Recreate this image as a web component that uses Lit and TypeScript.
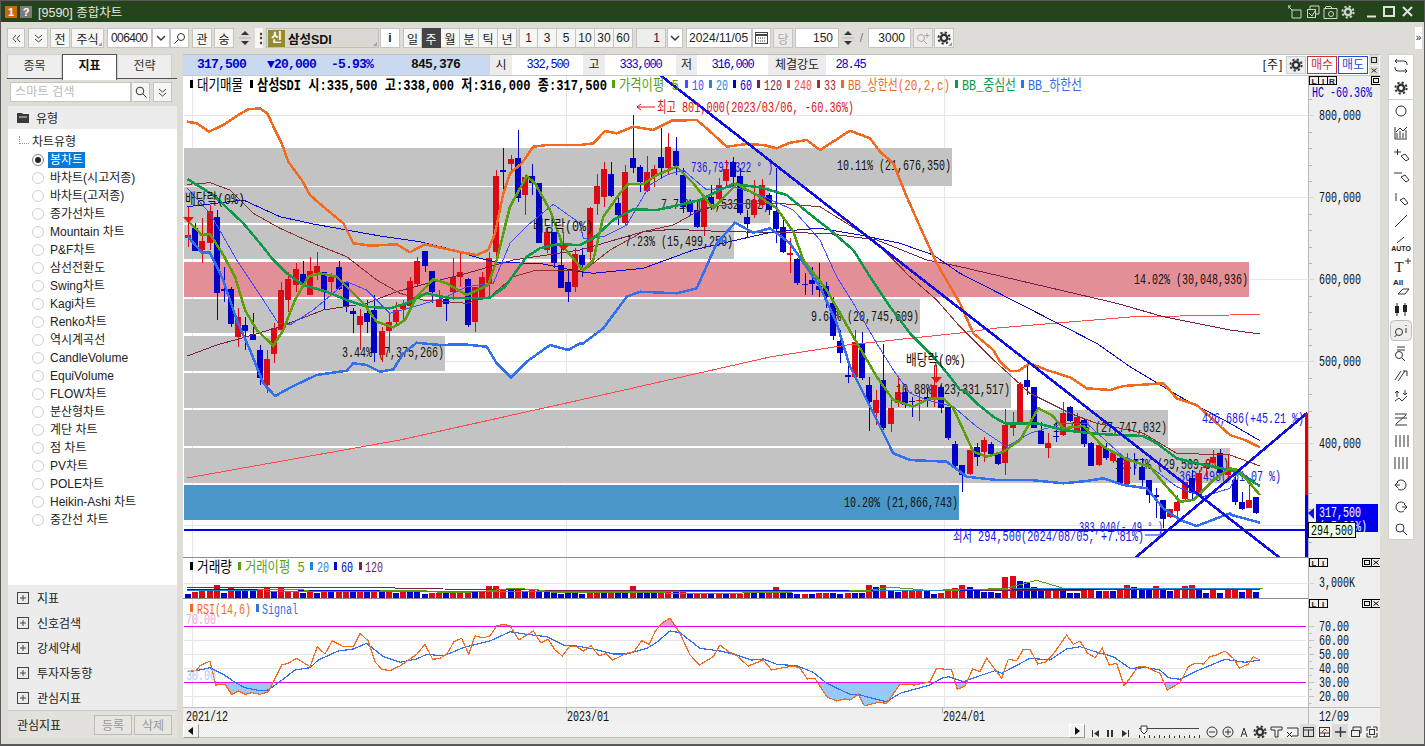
import { LitElement, css, html, svg } from 'lit';
import { customElement } from 'lit/decorators.js';

type Seg = [number, number, number[]];

const Z8 = [180, 100];
const Z9 = [560, 100];
const Z10 = [830, 300];
const Z5 = [1025, 380];
const Z11 = [180, 555];
const Z12 = [680, 555];
const Z6 = [1025, 600];

// the point lists are read off 3x crops, so they are kept in crop coordinates
const seg = (o: number[], pts: number[]): Seg => [o[0], o[1], pts];

function pts(...segs: Seg[]) {
  const out: string[] = [];
  let last = -1e9;
  for (const [ox, oy, a] of segs) {
    for (let i = 0; i < a.length; i += 2) {
      const x = ox + a[i] / 3;
      const y = oy + a[i + 1] / 3;
      if (x > last) {
        out.push(`${x.toFixed(1)},${y.toFixed(1)}`);
        last = x;
      }
    }
  }
  return out.join(' ');
}

// wick top, body top, body bottom, wick bottom, 1 = up
const CANDLES = [
  [207,235,238,247,1],[223,228,251,251,0],[218,241,250,263,1],[205,211,243,250,1],[210,217,293,320,0],
  [267,289,291,302,0],[287,289,324,327,0],[308,317,337,347,1],[317,325,331,350,0],[313,334,340,340,0],
  [345,350,378,385,0],[350,359,385,393,1],[323,328,354,363,1],[282,290,330,330,1],[272,279,300,312,1],
  [263,269,285,292,1],[261,274,285,285,0],[257,271,295,295,1],[252,266,273,280,1],[272,272,290,310,0],
  [273,277,282,295,1],[261,267,289,290,0],[282,282,307,312,0],[308,311,314,333,0],[309,316,325,350,1],
  [300,313,322,333,0],[295,310,353,362,0],[327,331,355,362,1],[313,322,331,353,1],[302,310,322,327,1],
  [300,305,309,320,1],[277,281,306,307,1],[257,261,284,287,1],[251,251,266,272,0],[271,271,292,303,0],
  [290,299,307,307,1],[297,299,304,321,0],[258,277,292,300,1],[253,272,277,287,1],[278,279,325,327,0],
  [287,287,322,332,1],[272,277,298,300,1],[252,258,283,297,1],[170,176,252,260,1],[148,170,172,193,0],
  [155,159,164,173,1],[130,158,198,202,0],[175,177,195,215,1],[164,176,183,195,0],[183,183,243,243,0],
  [227,232,250,253,1],[232,232,263,268,0],[243,265,288,288,0],[270,282,292,302,0],[248,254,287,292,1],
  [248,255,265,277,0],[207,208,252,260,1],[174,186,204,215,1],[162,169,197,207,1],[162,174,196,197,0],
  [198,203,215,225,0],[165,172,223,225,1],[115,158,168,173,0],[165,167,182,192,0],[156,172,191,192,1],
  [165,169,177,187,1],[128,157,168,178,0],[133,147,168,175,1],[137,151,166,175,0],[168,175,207,213,0],
  [200,202,212,215,0],[200,210,227,228,0],[197,199,227,236,1],[185,197,204,210,0],[178,185,199,200,1],
  [160,169,181,187,1],[157,162,177,188,0],[168,176,213,215,0],[210,217,224,237,0],[180,200,215,218,1],
  [179,185,205,208,1],[193,195,210,215,0],[168,211,229,243,0],[217,227,252,253,0],[238,253,255,273,1],
  [258,259,283,285,0],[273,284,285,295,0],[267,280,284,295,0],[263,286,290,297,0],[282,286,297,308,0],
  [297,303,336,340,0],[330,341,353,363,0],[360,375,377,383,0],[330,342,377,378,1],[332,344,378,380,0],
  [377,385,402,431,0],[390,400,413,425,1],[344,380,428,430,0],[398,408,424,432,1],[377,392,403,407,1],
  [387,392,405,408,0],[397,401,402,417,0],[390,400,401,421,1],[388,397,399,407,0],[365,385,399,407,1],
  [385,387,408,413,0],[407,407,438,440,0],[441,444,466,468,0],[465,465,475,492,0],[450,450,474,475,1],
  [443,447,457,466,0],[437,440,452,462,1],[442,444,454,457,0],[452,454,464,465,0],[409,425,463,475,1],
  [412,425,428,436,1],[382,384,424,424,1],[365,380,387,395,0],[387,387,428,428,0],[422,431,444,444,0],
  [433,443,448,458,1],[423,436,437,442,0],[402,413,435,436,1],[406,407,421,422,0],[413,417,432,433,1],
  [418,420,444,447,0],[442,443,466,466,0],[442,445,465,466,1],[443,448,458,460,0],[452,453,461,463,1],
  [457,458,483,485,0],[453,459,484,485,1],[453,460,461,475,0],[458,467,480,487,0],[480,480,495,503,0],
  [488,495,497,518,0],[500,500,519,528,0],[509,509,517,518,1],[495,502,511,517,1],[482,482,499,500,1],
  [470,478,493,500,0],[470,473,496,497,1],[460,463,468,477,1],[450,457,463,463,1],[449,453,473,475,0],
  [455,468,475,477,1],[468,480,502,505,0],[492,502,509,510,0],[483,500,508,508,1],[497,497,513,514,0],
];

// positive = red bar, negative = blue bar, in pixels
const VOLUME = [
  -4,6,8,8,13,-5,10,-7,-7,-7,9,10,-7,10,7,7,-5,7,-5,6,
  -6,6,6,-6,6,-8,8,-6,6,-5,6,-7,-7,-4,5,5,-6,6,5,5,
  -6,6,12,12,9,-9,10,-7,9,-6,-7,-6,-4,-5,-5,-4,5,5,-5,5,
  -6,-7,12,-7,-7,-7,6,6,-7,6,-4,5,5,-4,4,-4,4,4,5,-5,
  -5,5,11,-5,-5,-4,4,-4,5,5,-5,-4,5,-5,-5,13,-11,13,-8,-6,
  7,7,9,-7,-4,5,9,10,13,-11,-9,-6,-6,-5,21,22,-17,-16,-11,-8,
  8,8,-8,-5,-5,8,9,-7,7,-7,9,13,-11,-8,-8,12,-8,-7,8,12,
  13,-10,-5,8,-5,8,8,-6,8,-6,
];

const UPPER = pts(
  seg(Z8, [22,65,50,70,87,95,130,75,180,42,205,28,240,25,262,40,285,90,305,130,325,185,365,240,390,285,430,320,490,370,520,430,570,437,650,433,690,457,735,433,790,445,850,458,890,465,925,450,945,400,970,280,990,220,1025,190,1060,140,1100,135,1200,135]),
  seg(Z9, [60,138,100,130,135,93,170,100,220,80,280,90,335,62,410,60,440,85,500,140,560,132,610,135,650,145,690,128,740,120,780,150,870,92,930,115,960,155,1000,190,1040,290,1080,380,1130,490,1200,610]),
  seg(Z10, [430,100,490,150,510,185,540,213,565,213,600,190,650,210,720,232,770,265,840,270,880,258,1000,250,1040,295,1100,315,1150,360,1200,405]),
  seg(Z5, [660,180,705,202]),
);
const MID = pts(
  seg(Z8, [22,237,100,285,190,370,240,430,280,480,320,520,370,555,440,575,500,600,560,620,630,625,680,610,740,580,800,593,860,595,930,593,975,560,1040,470,1080,445,1130,433,1200,435]),
  seg(Z9, [50,433,100,415,160,360,220,328,290,330,370,312,420,300,480,270,520,252,600,262,680,285,740,335,810,390,880,450,930,530,990,620,1050,700,1120,770,1170,830,1200,870]),
  seg(Z10, [400,270,440,310,490,350,525,370,620,370,700,390,780,400,860,405,940,408,980,430,1040,475,1100,490,1200,510]),
  seg(Z5, [640,280,705,318]),
);
const LOWER = pts(
  seg(Z8, [22,408,65,457,90,458,130,540,170,660,210,750,250,850,285,888,340,858,410,825,500,812,520,790,560,795,600,815,640,808,670,760,710,728,780,735,850,733,920,740,950,790,993,833,1040,785,1110,735,1165,750,1200,730]),
  seg(Z9, [25,750,70,730,130,685,200,590,240,575,350,580,410,565,470,430,525,368,580,398,630,385,690,430,780,560,830,670,870,800,920,900]),
  seg(Z10, [100,270,190,460,240,480,350,485,410,530,500,540,600,540,700,550,770,543,820,535,880,555,950,565,1000,625,1050,660,1100,678,1200,640]),
  seg(Z5, [620,405,705,428]),
);
const MA5 = pts(
  seg(Z8, [22,360,65,405,90,402,130,465,165,530,195,630,230,690,280,737,310,690,345,600,385,530,420,520,470,530,500,560,550,610,590,665,640,682,675,660,710,590,760,538,800,550,860,585,925,555,950,480,990,320,1040,228,1065,250,1110,330,1150,440,1200,500]),
  seg(Z9, [40,490,70,510,100,480,130,350,180,280,205,252,250,252,290,225,350,200,400,250,460,325,530,252,590,285,650,325,700,395,730,480,800,570,840,640,880,710,950,830,1000,900]),
  seg(Z10, [250,320,300,295,340,295,370,325,430,455,470,470,520,455,570,420,625,325,665,345,700,385,760,378,820,440,890,478,960,500,1010,560,1050,605,1090,600,1150,540,1200,505]),
  seg(Z5, [615,258,640,270,705,345]),
);
const MA10 = pts(
  seg(Z8, [22,265,90,340,170,480,250,600,295,670,330,675,400,630,500,545,560,570,630,640,720,615,800,590,860,560,940,550,990,430,1050,370,1120,313,1200,370]),
  seg(Z9, [40,370,70,415,130,410,200,375,270,255,320,225,370,210,440,270,520,260,600,285,700,330,780,420,830,530,880,610,950,730,1000,810,1050,880]),
  seg(Z10, [210,240,290,300,370,320,440,380,530,440,600,400,700,370,770,370,880,470,960,500,1040,560,1120,590,1200,565]),
  seg(Z5, [640,270,705,318]),
);
const MA60 = pts(
  seg(Z8, [22,320,190,300,300,350,400,372,500,390,600,408,720,425,800,445,900,475,960,488,1080,490,1200,515]),
  seg(Z9, [100,520,250,505,400,450,530,420,640,395,780,385,900,405,1020,430,1120,465,1200,520]),
  seg(Z10, [800,130,900,200,1050,290,1200,370]),
  seg(Z5, [705,182]),
);
const MA33 = pts(
  seg(Z8, [22,253,90,248,150,270,220,340,300,385,400,430,500,470,590,540,660,580,730,600,860,610,930,590,1000,530,1070,510,1200,510]),
  seg(Z9, [80,505,150,450,250,395,340,375,430,325,530,310,650,310,780,320,860,370,950,430,1050,530,1130,600,1200,680]),
  seg(Z10, [400,90,480,170,600,280,720,340,800,370,940,400,1040,460,1200,465]),
  seg(Z5, [705,258]),
);
const MA120 = pts(
  seg(Z8, [22,768,110,735,200,710,300,680,430,630,560,610,650,575,760,545,860,520,1000,480,1200,450]),
  seg(Z9, [250,395,340,388,500,395,800,400,950,420,1100,480,1200,500]),
  seg(Z10, [860,10,1000,50,1200,90]),
  [1260, 334, [0, 0]],
);
const MA240 = '187,478 400,440 580,400 770,357 847,345 960,333 997,328 1130,317 1230,315 1260,314';

const RSI = pts(
  seg(Z11, [24,350,50,345,60,332,90,318,108,390,135,388,155,418,175,408,195,418,215,413,240,418,265,410,305,330,325,325,350,310,390,335,412,275,435,297,457,257,490,275,520,275,540,235,565,258,585,320,605,343,630,347,660,333,710,298,735,268,758,313,780,310,800,298,822,260,845,250,866,298,885,243,910,248,930,243,950,213,970,208,990,212,1017,255,1060,228,1082,263,1105,253,1125,285,1147,303,1168,275,1190,275,1210,288,1233,272,1257,303,1278,295,1298,315,1340,295,1362,290,1385,257,1408,268,1425,230,1445,205,1470,190,1500,235]),
  seg(Z12, [30,300,58,330,100,305,120,270,145,290,165,298,205,333,250,315,275,345,300,340,340,333,360,340,382,372,405,370,440,425,470,438,495,432,510,435,535,418,553,452,595,442,620,445,660,388,705,390,750,380,770,340,815,345,832,403,855,393,878,342,900,350,920,310,965,370,985,313,1010,317,1030,283,1050,283,1073,327,1095,322,1118,300,1160,240,1180,268,1200,258,1223,295,1245,308,1267,280,1288,330,1310,325,1332,393,1375,335,1395,335,1440,355,1462,405,1500,383]),
  seg(Z6, [490,200,510,190,535,192,555,170,575,165,600,153,625,175,643,205,670,192,685,170,705,180]),
);
const SIGNAL = pts(
  seg(Z11, [24,350,60,345,90,338,130,358,165,382,195,398,240,407,265,405,310,372,345,345,390,338,415,315,475,288,520,282,560,265,610,305,660,322,710,312,740,298,790,303,850,278,880,270,930,258,990,230,1040,238,1100,245,1155,272,1190,273,1240,282,1300,297,1340,297,1400,280,1430,262,1470,228,1500,233]),
  seg(Z12, [60,280,120,288,170,300,215,315,250,312,290,328,350,332,400,352,440,385,510,418,540,420,620,440,660,415,750,390,785,370,805,365,850,380,900,362,945,347,965,355,1050,310,1110,315,1160,282,1200,275,1245,290,1300,305,1350,340,1400,338,1440,345,1465,368,1500,373]),
  seg(Z6, [510,215,600,178,660,187,705,180]),
);
const VOL5 = pts(seg(Z11, [20,108,200,106,300,103,360,103,400,110,550,108,600,108,720,106,800,114,900,110,1000,100,1070,104,1120,112,1300,112]), seg(Z12, [110,116,220,113,560,107,630,97,700,102,760,108,980,100,1070,76,1150,100,1500,100]), [1180, 588, [250, 0]]);
const VOL60 = pts(seg(Z11, [20,102,200,102,400,106,730,108,1500,108]), seg(Z12, [130,106,800,106,1500,100]), [1180, 588, [240, 0]]);
const VOL120 = pts(seg(Z11, [20,96,600,98,790,102,1070,105,1500,106]), seg(Z12, [0,110,800,108,1500,103]), [1180, 589, [240, 0]]);
const VOL20 = pts(seg(Z11, [20,105,200,105,230,108,1500,110]), seg(Z12, [580,108,1000,102,1500,100]), [1180, 588, [240, 0]]);

const RED = '#dc0a14';
const BLUE = '#0000c8';
const TREND = '#1010e6';

const cx = (i: number) => Math.round(188 + 7.17 * i);

// the reference font is half-width: 6px per latin char, 12 per hangul
function T(x: number, y: number, s: string, fill = '#000', o: { end?: boolean; w?: number; bold?: boolean; a?: number } = {}) {
  const a = o.a ?? 6;
  const w = o.w ?? [...s].reduce((n, c) => n + (c.charCodeAt(0) < 128 ? a : a * 2), 0);
  return svg`<text x=${x} y=${y} fill=${fill} text-anchor=${o.end ? 'end' : 'start'} font-weight=${o.bold ? 'bold' : 'normal'} textLength=${w} lengthAdjust="spacingAndGlyphs">${s}</text>`;
}
const dot = (x: number, y: number, c: string) => svg`<rect x=${x} y=${y - 5} width="3" height="8" fill=${c}></rect>`;
const line = (p: string, c: string, w = 1) => svg`<polyline points=${p} fill="none" stroke=${c} stroke-width=${w} shape-rendering="crispEdges"></polyline>`;
const hl = (x1: number, x2: number, y: number, c: string, w = 1) => svg`<rect x=${x1} y=${y} width=${x2 - x1} height=${w} fill=${c}></rect>`;
const vl = (x: number, y1: number, y2: number, c: string, w = 1) => svg`<rect x=${x} y=${y1} width=${w} height=${y2 - y1} fill=${c}></rect>`;

function miniBoxes(y: number, labels: string[], marks: string[]) {
  return svg`
    ${labels.map((l, i) => svg`<rect x=${1309.5 + i * 9} y=${y + 0.5} width="9" height="8" fill="#efefef" stroke="#000"></rect>
      <text x=${1314 + i * 9} y=${y + 7.5} class="mini" text-anchor="middle">${l}</text>`)}
    ${marks.map((m, i) => {
      const x = 1380 - (marks.length - i) * 9 + 0.5;
      return svg`<rect x=${x} y=${y + 0.5} width="9" height="8" fill="#efefef" stroke="#000"></rect>
        ${m === 'x'
          ? svg`<path d="M${x + 2} ${y + 2.5}l5 4m0 -4l-5 4" stroke="#000" fill="none"></path>`
          : svg`<rect x=${x + 2} y=${y + 2.5} width="5" height="4" fill="none" stroke="#000" stroke-width="1"></rect>`}`;
    })}`;
}

function marker(x: number, y1: number, y2: number) {
  return svg`${vl(x, y1, y2, '#f01010')}<path d="M${x - 5} ${y2}h11l-5.5 6z" fill="#f01010"></path>`;
}

const BOXES: [number, number, number, string, string, number][] = [
  [148, 186, 952, '#c3c3c3', '10.11% (21,676,350)', 170],
  [187, 223, 770, '#c3c3c3', '7.71% (16,532,822)', 209],
  [225, 259, 734, '#c3c3c3', '7.23% (15,499,250)', 246],
  [262, 297, 1249, '#e38f97', '14.02% (30,048,936)', 284],
  [299, 333, 920, '#c3c3c3', '9.68% (20,745,609)', 321],
  [336, 371, 445, '#c3c3c3', '3.44% (7,375,266)', 357],
  [373, 408, 1011, '#c3c3c3', '10.88% (23,331,517)', 394],
  [410, 446, 1168, '#c3c3c3', '12.95% (27,747,032)', 432],
  [448, 483, 1230, '#c3c3c3', '13.77% (29,509,943)', 469],
  [485, 520, 959, '#4a97c7', '10.20% (21,866,743)', 507],
];

const PRICE_TICKS = [115, 197, 279, 361, 443];

function mainPane() {
  const minor: number[] = [];
  for (let y = 115 - 16; y < 556; y += 16.4) minor.push(Math.round(y));
  const legend: [number, string, string][] = [
    [685, '10', '#4050ff'], [709, '20', '#1e88d8'], [733, '60', '#0000c8'], [757, '120', '#7a1e50'],
    [787, '240', '#f04848'], [817, '33', '#a03030'], [841, 'BB_상한선(20,2,c)', '#f26a1e'],
    [955, 'BB_중심선', '#0a9a4a'], [1021, 'BB_하한선', '#2f6ff0'],
  ];
  return html`<svg class="pane" width="1197" height="483" viewBox="183 75 1197 483">
    ${PRICE_TICKS.map((y) => hl(184, 1314, y, '#e6e6e6'))}
    ${hl(184, 1308, 525, '#e6e6e6')}
    ${[192, 566, 944].map((x) => vl(x, 75, 558, '#e6e6e6'))}
    ${BOXES.map(([a, b, r, c]) => svg`<rect x="184" y=${a} width=${r - 184} height=${b - a} fill=${c}></rect>`)}
    ${BOXES.map(([, , r, , t, y]) => T(r - 1, y, t, '#111', { end: true }))}
    ${T(691, 172, '736,797(322 ° )', '#1414e6', { w: 82 })}
    ${T(1179, 481, '360,498(+51.07 %)', '#1414e6')}

    ${CANDLES.map(([wt, bt, bb, wb, up], i) => {
      const x = cx(i);
      const c = up ? RED : BLUE;
      return svg`${vl(x, wt, wb, c)}<rect x=${x - 3} y=${bt} width="6" height=${Math.max(bb - bt, 1)} fill=${c}></rect>`;
    })}

    ${line(MA240, '#ff4a4a')}
    ${line(MA120, '#7a1e50')}
    ${line(MA60, '#0a0ad0')}
    ${line(MA33, '#8e3030')}
    ${line(MA10, '#4050ff')}
    ${line(UPPER, '#f26a1e', 2.5)}
    ${line(LOWER, '#2f6ff0', 2.5)}
    ${line(MID, '#0a9a4a', 2.5)}
    ${line(MA5, '#5a9e0a', 2.5)}

    <line x1="660" y1="75" x2="1280" y2="558" stroke=${TREND} stroke-width="2.6" shape-rendering="crispEdges"></line>
    <line x1="1307" y1="413" x2="1135" y2="558" stroke=${TREND} stroke-width="2.6" shape-rendering="crispEdges"></line>
    ${hl(184, 1306, 529, '#0000f0', 2)}
    ${vl(1305, 413, 495, '#e80000', 3)}
    ${vl(1305, 495, 558, '#0000e0', 3)}

    ${marker(188, 207, 217)} ${marker(563, 232, 245)} ${marker(936, 365, 377)}
    ${T(185, 204, '배당락(0%)', '#111')} ${T(533, 231, '배당락(0%)', '#111')} ${T(906, 365, '배당락(0%)', '#111')}

    ${T(1202, 423, '426,686(+45.21 %)', '#1414e6')}
    ${T(1079, 532, '383,040(-.49 ° )', '#1414e6', { w: 84 })}
    ${T(953, 541, '최저 294,500(2024/08/05, +7.81%)', '#1414e6', { w: 191 })}
    <path d="M1145 535h19m-4 -3l4 3l-4 3" fill="none" stroke="#1414e6"></path>
    <path d="M655 107h-18m4 -3l-4 3l4 3" fill="none" stroke="#e01010"></path>
    ${T(657, 112, '최고 801,000(2023/03/06, -60.36%)', '#e01010', { w: 197 })}

    <!-- legend -->
    ${dot(190, 85, '#000')} ${T(197, 90, '대기매물', '#000', { w: 46 })}
    ${dot(250, 85, '#000')} ${T(257, 90, '삼성SDI 시:335,500 고:338,000 저:316,000 종:317,500', '#000', { bold: true, w: 350 })}
    ${dot(612, 85, '#5a9e0a')} ${T(619, 90, '가격이평  5', '#5a9e0a', { w: 60 })}
    ${legend.map(([x, t, c]) => svg`${dot(x, 85, c)}${T(x + 7, 90, t, c)}`)}

    <!-- price scale -->
    <rect x="1308" y="75" width="72" height="483" fill="#efefef"></rect>
    ${vl(1308, 75, 558, '#b9b9b9')} ${vl(1380, 75, 558, '#c4c4c4')}
    ${minor.map((y) => hl(1308, 1312, y, '#b4b4b4'))}
    ${PRICE_TICKS.map((y, i) => svg`${hl(1308, 1314, y, '#d4d4d4')}${T(1319, y + 5, ['800,000', '700,000', '600,000', '500,000', '400,000'][i], '#111')}`)}
    ${T(1312, 97, 'HC -60.36%', '#0000d0')}
    ${miniBoxes(76, ['L', 'I', 'R'], ['o'])}

    <path d="M1308 513l6 -5v11z" fill="#1010e6"></path>
    <rect x="1316" y="504" width="62" height="28" fill="#0000f0"></rect>
    ${T(1319, 517, '317,500', '#fff')}
    ${T(1319, 531, '(-5.93%)', '#fff')}
    <rect x="1308.5" y="522.5" width="47" height="15" fill="#eaffe8" stroke="#000"></rect>
    ${T(1311, 535, '294,500', '#000')}
    ${hl(183, 1308, 557, '#8c8c8c')}
    ${hl(183, 1380, 75, '#c8c8c8')}
  </svg>`;
}

function volumePane() {
  return html`<svg class="pane" width="1197" height="41" viewBox="183 558 1197 41">
    ${hl(184, 1308, 583, '#e6e6e6')}
    ${[192, 566, 944].map((x) => vl(x, 558, 598, '#e6e6e6'))}
    ${VOLUME.map((h, i) => svg`<rect x=${cx(i) - 3} y=${598 - Math.abs(h)} width="6" height=${Math.abs(h)} fill=${h > 0 ? RED : BLUE}></rect>`)}
    ${line(VOL120, '#7a1e50')} ${line(VOL60, '#0a0ad0')} ${line(VOL5, '#5a9e0a')} ${line(VOL20, '#1e88d8')}
    ${dot(190, 567, '#000')} ${T(197, 572, '거래량', '#000', { w: 35 })}
    ${dot(238, 567, '#5a9e0a')} ${T(245, 572, '거래이평  5', '#5a9e0a', { w: 60 })}
    ${dot(310, 567, '#1e88d8')} ${T(317, 572, '20', '#1e88d8')}
    ${dot(334, 567, '#0000c8')} ${T(341, 572, '60', '#0000c8')}
    ${dot(359, 567, '#7a1e50')} ${T(365, 572, '120', '#7a1e50')}
    <rect x="1308" y="558" width="72" height="41" fill="#efefef"></rect>
    ${vl(1308, 558, 599, '#b9b9b9')} ${vl(1380, 558, 599, '#c4c4c4')}
    ${hl(1308, 1314, 583, '#d4d4d4')}
    ${T(1319, 587, '3,000K', '#111')}
    ${miniBoxes(558, ['L', 'I'], ['o', 'x'])}
    ${hl(183, 1308, 598, '#8c8c8c')}
  </svg>`;
}

function rsiPane() {
  const first = RSI.split(' ')[0].split(',')[0];
  const last = RSI.split(' ').pop()!.split(',')[0];
  const labels = ['70.00', '60.00', '50.00', '40.00', '30.00', '20.00'];
  const ys = [626, 640, 654, 668, 682, 696];
  return html`<svg class="pane" width="1197" height="108" viewBox="183 599 1197 108">
    <defs>
      <clipPath id="lo"><rect x="184" y="682" width="1124" height="25"></rect></clipPath>
      <clipPath id="hi"><rect x="184" y="599" width="1124" height="27"></rect></clipPath>
    </defs>
    ${ys.map((y) => hl(184, 1306, y, '#e4e4e4'))}
    ${[192, 566, 944].map((x) => vl(x, 599, 707, '#e6e6e6'))}
    <polygon points="${first},682 ${RSI} ${last},682" fill="#99c8fb" clip-path="url(#lo)"></polygon>
    <polygon points="${first},626 ${RSI} ${last},626" fill="#f09ccc" clip-path="url(#hi)"></polygon>
    ${hl(184, 1306, 626, '#f000f0')} ${hl(184, 1306, 682, '#f000f0')}
    ${line(SIGNAL, '#2f6ff0', 1.2)}
    ${line(RSI, '#f26a1e', 1.2)}
    ${T(186, 624, '70.00', '#f7a1d4')} ${T(186, 680, '30.00', '#a5cffb')}
    ${dot(190, 609, '#f26a1e')} ${T(197, 614, 'RSI(14,6)', '#f26a1e')}
    ${dot(256, 609, '#2f6ff0')} ${T(262, 614, 'Signal', '#2f6ff0')}
    <rect x="1308" y="599" width="72" height="108" fill="#efefef"></rect>
    ${vl(1308, 599, 707, '#b9b9b9')} ${vl(1380, 599, 707, '#c4c4c4')}
    ${ys.map((y, i) => svg`${hl(1308, 1314, y, '#c4c4c4')}${hl(1308, 1312, y + 7, '#c4c4c4')}${T(1319, y + 5, labels[i], '#111')}`)}
    ${miniBoxes(599, ['L', 'I'], ['o', 'x'])}
  </svg>`;
}

function axisPane() {
  return html`<svg class="pane" width="1197" height="17" viewBox="183 707 1197 17">
    <rect x="183" y="707" width="1197" height="17" fill="#efefef"></rect>
    ${hl(183, 1380, 707, '#bdbdbd')} ${vl(1308, 707, 724, '#b9b9b9')} ${vl(1380, 707, 724, '#c4c4c4')}
    ${vl(566, 708, 713, '#b0b0b0')} ${vl(942, 708, 713, '#b0b0b0')}
    ${T(186, 721, '2021/12', '#111')} ${T(567, 721, '2023/01', '#111')} ${T(943, 721, '2024/01', '#111')}
    ${T(1319, 721, '12/09', '#111')}
  </svg>`;
}

function gear(x: number, y: number, c = '#333') {
  return svg`<circle cx=${x} cy=${y} r="3.2" fill="none" stroke=${c} stroke-width="2.4"></circle>
    <circle cx=${x} cy=${y} r="5.6" fill="none" stroke=${c} stroke-width="2" stroke-dasharray="2.2 2.2"></circle>`;
}
const gearIcon = html`<svg width="14" height="14" viewBox="0 0 14 14">${gear(7, 7)}</svg>`;

function controls() {
  const ticks = [];
  for (let x = 1139; x <= 1199; x += 5) ticks.push(vl(x, x % 2 ? 735 : 736, 738, '#333'));
  return html`<svg class="ctl" width="295" height="14" viewBox="1085 724 295 14">
    <g fill="#333" stroke="none">
      <path d="M1092 730h1v7h-1zM1099 730v7l-5 -3.5z"></path>
      <path d="M1107 730h2v7h-2zM1111 730h2v7h-2z"></path>
      <path d="M1122 730v7l5 -3.5zM1128 730h1v7h-1z"></path>
    </g>
    ${hl(1139, 1199, 728, '#444')}
    <path d="M1141 726h6v5l-3 3l-3 -3z" fill="#fff" stroke="#333"></path>
    ${ticks}
    <g fill="none" stroke="#333">
      <circle cx="1212" cy="732" r="5"></circle><path d="M1209 732h6"></path>
      <circle cx="1228" cy="732" r="5"></circle><path d="M1225 732h6M1228 729v6"></path>
      <path d="M1241 737l3 -9l3 9M1242 734h4"></path>
      <path d="M1271 727h11v3h-4v7h-3v-7h-4z"></path>
      <path d="M1287 728h11v8h-6"></path><path d="M1287 732l5 5m0 -5l-5 5" stroke="#222"></path>
    </g>
    ${gear(1260, 732)}
    <rect x="1300" y="724" width="16" height="14" fill="#dcdcdc"></rect>
    <rect x="1332" y="724" width="16" height="14" fill="#dcdcdc"></rect>
    <g fill="none" stroke="#333">
      <rect x="1303.5" y="727.5" width="10" height="9"></rect><path d="M1303 730h11M1308.5 730v7"></path>
      <rect x="1319.5" y="727.5" width="10" height="9"></rect><path d="M1319 733h11M1324.5 733v4"></path>
      <path d="M1335 732h11M1340.5 727v10" stroke-width="1.4"></path>
      <rect x="1351.5" y="730.5" width="8" height="6"></rect><path d="M1353 730v-3h8v6h-2"></path>
      <path d="M1367 731v-4h4M1373 727h4v4M1377 733v4h-4M1371 737h-4v-4"></path><rect x="1369.5" y="729.5" width="5" height="5"></rect>
    </g>
    <path d="M1322 733l3 -3l2 2" stroke="#d02020" fill="none" transform="translate(0 -1)"></path>
  </svg>`;
}

const TOOL_ICONS = [
  svg`<path d="M8 4l-2 2l2 2M6 6h9a3 3 0 0 1 3 3v1M16 18l2 -2l-2 -2M18 16h-9a3 3 0 0 1 -3 -3v-1" fill="none" stroke="#333"></path>`,
  gear(12, 11),
  svg`<circle cx="12" cy="11" r="5" fill="none" stroke="#333"></circle>`,
  svg`<path d="M6 5v12h12M8 16v-5M11 16v-7M14 16v-5M17 16v-8M7 10l4 -4l3 3l4 -4" fill="none" stroke="#333"></path>`,
  svg`<path d="M5 8h7M8.5 5v6M12 12l4 -2l4 5l-3 2z" fill="none" stroke="#333"></path>`,
  svg`<path d="M5 7h8M12 11l4 -2l4 5l-3 2z" fill="none" stroke="#333"></path>`,
  svg`<path d="M7 5v8M11 12l4 -2l4 5l-3 2z" fill="none" stroke="#333"></path>`,
  svg`<path d="M6 17l12 -12" fill="none" stroke="#333"></path>`,
  svg`<path d="M8 11l7 -6" fill="none" stroke="#333"></path><text x="12" y="19" text-anchor="middle" class="auto">AUTO</text>`,
  svg`<text x="10" y="18" text-anchor="middle" class="big">T</text><path d="M16 7h6M19 4v6" stroke="#333" fill="none"></path>`,
  svg`<text x="9" y="9" text-anchor="middle" class="mini">All</text><path d="M9 18l5 -5h6l-4 5z" fill="none" stroke="#333"></path>`,
  svg`<path d="M8 5v13M16 5v13" stroke="#222"></path><rect x="6" y="8" width="4" height="7" fill="#222"></rect><rect x="14" y="7" width="4" height="7" fill="#222"></rect>`,
  svg`<rect x="1.5" y="0.5" width="21" height="20" rx="4" fill="#ededeb" stroke="#bdbdbd"></rect><circle cx="10" cy="12" r="3.5" fill="none" stroke="#333"></circle><path d="M7.5 15l-2 2M17 5v1M17 8v5" stroke="#333" fill="none"></path>`,
  svg`<path d="M8 5h8M8 8h8" stroke="#333" fill="none"></path><circle cx="10" cy="13" r="3.5" fill="none" stroke="#333"></circle><path d="M13 16l3 3" stroke="#333"></path>`,
  svg`<path d="M6 16l6 -9M9 17l7 -10M14 7l4 0v5" fill="none" stroke="#333"></path>`,
  svg`<path d="M6 15l4 -3l3 3l5 -5M8 5v6M6 7l2 -2l2 2M16 4v5M14 7l2 2l2 -2" fill="none" stroke="#333"></path>`,
  svg`<path d="M6 6h12M6 10h12M6 17h12M7 16l10 -9" fill="none" stroke="#333"></path>`,
  svg`<path d="M7 5v12M11 5v12M15 5v12M19 5v12" stroke="#333" fill="none"></path>`,
  svg`<path d="M6 5v12M10 5v12M14 5v12M18 5v12" stroke="#333" fill="none"></path>`,
  svg`<path d="M8 8a5 5 0 1 1 1 7M6 11h5M6 11l3 -3M6 11l3 3" fill="none" stroke="#333"></path>`,
  svg`<path d="M16 8a5 5 0 1 0 -1 7M18 11h-5M18 11l-3 -3M18 11l-3 3" fill="none" stroke="#333"></path>`,
  svg`<circle cx="11" cy="10" r="4" fill="none" stroke="#333"></circle><path d="M14 13l4 4" stroke="#333"></path>`,
];

const PERIOD = ['일', '주', '월', '분', '틱', '년'];
const MINUTES = ['1', '3', '5', '10', '30', '60'];
const CHARTS = ['봉차트', '바차트(시고저종)', '바차트(고저종)', '종가선차트', 'Mountain 차트', 'P&F차트', '삼선전환도', 'Swing차트', 'Kagi차트', 'Renko차트', '역시계곡선', 'CandleVolume', 'EquiVolume', 'FLOW차트', '분산형차트', '계단 차트', '점 차트', 'PV차트', 'POLE차트', 'Heikin-Ashi 차트', '중간선 차트'];
const SECTIONS = ['지표', '신호검색', '강세약세', '투자자동향', '관심지표'];

const plusBox = html`<svg width="12" height="12" viewBox="0 0 12 12"><rect x="0.5" y="0.5" width="11" height="11" fill="none" stroke="#444"></rect><path d="M3 6h6M6 3v6" stroke="#444"></path></svg>`;
const updown = html`<svg width="12" height="20" viewBox="0 0 12 20"><path d="M2 7l4 -4l4 4z" fill="#333"></path><rect x="0" y="9" width="12" height="2" fill="#c8c8c4"></rect><path d="M2 13h8l-4 4z" fill="#333"></path></svg>`;
const chevron = html`<svg width="10" height="8" viewBox="0 0 10 8"><path d="M1 2l4 4l4 -4" fill="none" stroke="#333" stroke-width="1.4"></path></svg>`;
const doubleDown = html`<svg width="9" height="9" viewBox="0 0 9 9"><path d="M1 1l3.500 3l3.500 -3M1 5l3.500 3l3.500 -3" fill="none" stroke="#444"></path></svg>`;
const doubleLeft = html`<svg width="9" height="9" viewBox="0 0 9 9"><path d="M4 1l-3 3.500l3 3.500M8 1l-3 3.500l3 3.500" fill="none" stroke="#444"></path></svg>`;

@customElement('app-root')
export class AppRoot extends LitElement {
  render() {
    return html`
      <div class="win">
        <header class="title">
          <span class="badge one">1</span><span class="badge help">?</span>
          <span class="caption">[9590] 종합차트</span>
          <svg class="winbtns" width="130" height="16" viewBox="0 0 130 16">
            <g fill="none" stroke="#cfd6c8">
              <path d="M0 2h3M0 2v3M4 6h9v8H4zM0 2l4 4"></path>
              <rect x="19.5" y="5.5" width="8" height="8"></rect><path d="M22 5V2h9v8h-3M21 9l3 3l3 -5"></path>
              <path d="M36 4.500h13v10H36zM37 4.500l1 -2h5l1 2"></path><circle cx="43" cy="10" r="2.5"></circle>
            </g>
            ${svg`${gear(60, 8, '#cfd6c8')}`}
            <path d="M79 12.500h9" stroke="#dfe4da" stroke-width="2"></path>
            <rect x="96" y="3" width="10" height="9" fill="none" stroke="#dfe4da" stroke-width="2"></rect>
            <path d="M115 3l9 9m0 -9l-9 9" stroke="#dfe4da" stroke-width="2"></path>
          </svg>
        </header>

        <div class="toolbar">
          <button style="width:18px">${doubleLeft}</button>
          <button class="m3" style="width:20px">${doubleDown}</button>
          <button class="m2" style="width:20px">전</button>
          <button class="m1 corner" style="width:33px">주식</button>
          <span class="input code">006400</span>
          <button class="fill" style="width:18px">${chevron}</button>
          <button class="fill" style="width:19px"><svg width="13" height="13" viewBox="0 0 13 13"><circle cx="8" cy="5" r="3.5" fill="none" stroke="#333"></circle><path d="M5.500 7.500l-4 4" stroke="#333"></path></svg></button>
          <button class="m3" style="width:20px">관</button>
          <button class="m2" style="width:20px">숭</button>
          <span class="spin">${updown}</span>
          <span class="dots">⋮</span>
          <span class="name corner"><i>신</i><b>삼성SDI</b></span>
          <button class="m1 fill bold" style="width:20px">i</button>
          <div class="seg m3">${PERIOD.map((p) => html`<button class=${p === '주' ? 'on' : ''} style="width:19px">${p}</button>`)}</div>
          <div class="seg m2">${MINUTES.map((p) => html`<button style="width:19px">${p}</button>`)}</div>
          <span class="input num grey">1</span>
          <button class="m1 fill" style="width:16px">${chevron}</button>
          <span class="input date">2024/11/05</span>
          <button class="fill" style="width:19px"><svg width="13" height="12" viewBox="0 0 13 12"><rect x="0.500" y="0.500" width="12" height="11" fill="none" stroke="#444"></rect><path d="M1 3h11" stroke="#444" stroke-width="2"></path><path d="M3 6h7M3 9h7" stroke="#444" stroke-dasharray="1 1"></path></svg></button>
          <button class="m2 dis" style="width:20px">당</button>
          <span class="input num n150">150</span>
          <span class="spin s2">${updown}</span>
          <span class="slash">/</span>
          <span class="input num n3000">3000</span>
          <button class="m2 dis" style="width:20px"><svg width="15" height="13" viewBox="0 0 15 13"><circle cx="5" cy="6" r="3.5" fill="none" stroke="#aaa"></circle><path d="M8 9l3 3M11 1v5M8.500 3.500h5" stroke="#aaa" fill="none"></path></svg></button>
          <button class="m1 corner" style="width:20px">${gearIcon}</button>
          <span class="more">»</span>
        </div>

        <div class="main">
          <aside class="side">
            <div class="tabs">
              <span>종목</span><span class="active">지표</span><span>전략</span>
            </div>
            <div class="search">
              <span class="smart">스마트 검색</span>
              <button style="width:19px"><svg width="12" height="12" viewBox="0 0 12 12"><circle cx="5" cy="5" r="3.800" fill="none" stroke="#333"></circle><path d="M8 8l3.500 3.500" stroke="#333"></path></svg></button>
              <button class="sm" style="width:19px">${doubleDown}</button>
            </div>
            <div class="head">
              <svg width="12" height="11" viewBox="0 0 12 11"><path d="M0 1h5l1 1h6v9H0z" fill="#3a3a3a"></path><path d="M2 5h8" stroke="#ddd"></path></svg>
              <span>유형</span>
            </div>
            <div class="tree">
              <div class="root">차트유형</div>
              ${CHARTS.map((c, i) => html`<div class="opt">
                <span class="radio ${i === 0 ? 'sel' : ''}"></span><span class="lbl ${i === 0 ? 'sel' : ''}">${c}</span>
              </div>`)}
            </div>
            <div class="sections">
              ${SECTIONS.map((s) => html`<div class="sec">${plusBox}<span>${s}</span></div>`)}
            </div>
            <div class="foot">
              <span>관심지표</span>
              <button style="width:38px">등록</button>
              <button style="width:38px">삭제</button>
            </div>
          </aside>

          <section class="chart">
            <div class="strip">
              <div class="price">
                <b class="last">317,500</b>
                <b class="chg">▼20,000</b>
                <b class="pct">-5.93%</b>
                <b class="vol">845,376</b>
              </div>
              <span class="k k1">시</span><span class="v v1">332,500</span>
              <span class="k k1">고</span><span class="v v1">333,000</span>
              <span class="k k2">저</span><span class="v v2">316,000</span>
              <span class="k k3">체결강도</span><span class="v v3">28.45</span>
              <span class="spacer"></span>
              <span class="tag">[주]</span>
              <button class="sgear">${gearIcon}</button>
              <span class="buy">매수</span><span class="sell">매도</span>
              <span class="pair"><svg width="10" height="20" viewBox="0 0 10 20"><rect x="0" y="0" width="10" height="10" fill="#ddd"></rect><rect x="2.500" y="2.500" width="5" height="5" fill="none" stroke="#222"></rect><rect x="0" y="11" width="10" height="9" fill="#ddd"></rect><path d="M2.500 13.500l5 4m0 -4l-5 4" stroke="#222"></path></svg></span>
            </div>
            ${mainPane()} ${volumePane()} ${rsiPane()} ${axisPane()}
            <div class="scroll">
              <span class="arrow"><svg width="6" height="8" viewBox="0 0 6 8"><path d="M5 0v8L0 4z" fill="#111"></path></svg></span>
              <span class="track"></span>
              <span class="arrow"><svg width="6" height="8" viewBox="0 0 6 8"><path d="M1 0v8l5 -4z" fill="#111"></path></svg></span>
              ${controls()}
            </div>
          </section>

          <nav class="tools">
            ${TOOL_ICONS.map((ic, i) => html`<svg class=${i === 1 ? 'cut' : ''} width="24" height=${i === 1 ? 23 : 22} viewBox="0 0 24 22">${ic}</svg>`)}
          </nav>
        </div>
      </div>
    `;
  }

  static styles = css`
    :host {
      display: block;
      width: 1425px;
      height: 747px;
      overflow: hidden;
      font-family: 'Liberation Sans', 'Noto Sans CJK KR', sans-serif;
      font-size: 12px;
      color: #222;
    }
    * { box-sizing: border-box; }
    button { font: inherit; color: inherit; padding: 0; }

    .win {
      height: 746px;
      background: #dddcd7;
      border: 1px solid #5a5a5a;
      border-bottom-width: 2px;
      display: flex;
      flex-direction: column;
    }

    .title {
      height: 21px;
      background: #24451c;
      display: flex;
      align-items: center;
      padding-left: 4px;
      color: #e4e8e0;
      flex: none;
    }
    .badge {
      width: 12px;
      height: 12px;
      color: #fff;
      font-weight: bold;
      font-size: 11px;
      line-height: 12px;
      text-align: center;
      margin-right: 3px;
    }
    .one { background: #c8690c; }
    .help { background: #7b7b7b; }
    .caption { margin-left: 3px; font-size: 12.500px; }
    .winbtns { margin-left: auto; margin-right: 6px; }

    .toolbar {
      height: 32px;
      padding: 6px 0 0 6px;
      display: flex;
      align-items: flex-start;
      flex: none;
      position: relative;
    }
    .toolbar button,
    .search button,
    .foot button {
      height: 20px;
      background: #f6f6f4;
      border: 1px solid #c4c4c0;
      display: flex;
      align-items: center;
      justify-content: center;
      font-size: 12px;
    }
    .toolbar .m1 { margin-left: 1px; }
    .toolbar .m2 { margin-left: 2px; }
    .toolbar .m3 { margin-left: 3px; }
    .toolbar .fill { background: #fff; }
    .toolbar .bold { font-weight: bold; }
    .toolbar .dis { color: #aaa; background: #ecebe7; }
    .corner { position: relative; }
    .corner::after {
      content: '';
      position: absolute;
      right: 1px;
      bottom: 1px;
      border-style: solid;
      border-width: 0 0 4px 4px;
      border-color: transparent transparent #a0a09a transparent;
    }
    .input {
      height: 20px;
      background: #fff;
      border: 1px solid #c4c4c0;
      display: flex;
      align-items: center;
      font-size: 12px;
      flex: none;
    }
    .code { width: 45px; margin-left: 3px; padding-left: 3px; letter-spacing: -0.6px; }
    .grey { background: #eeeeec; margin-left: 3px; width: 30px; }
    .date { width: 66px; margin-left: 3px; padding-left: 2px; }
    .num { justify-content: flex-end; padding-right: 5px; }
    .n150 { width: 44px; margin-left: 2px; }
    .n3000 { width: 43px; }
    .spin { width: 19px; height: 20px; margin-left: 1px; display: flex; justify-content: center; flex: none; }
    .s2 { width: 15px; }
    .dots { width: 8px; margin-left: 1px; text-align: center; font-weight: bold; line-height: 20px; background: #f6f6f4; flex: none; }
    .slash { width: 13px; text-align: center; line-height: 20px; color: #777; flex: none; }
    .name {
      width: 113px;
      height: 20px;
      margin-left: 3px;
      background: #d9d8d2;
      border: 1px solid #c0bfb8;
      display: flex;
      align-items: center;
      flex: none;
    }
    .name i {
      width: 17px;
      height: 17px;
      margin: 0 3px 0 1px;
      background: #958a35;
      color: #fff;
      font-style: normal;
      font-weight: bold;
      text-align: center;
      line-height: 17px;
    }
    .name b { font-size: 12.500px; color: #111; }
    .seg { display: flex; flex: none; }
    .seg.m2 { margin-left: 2px; }
    .seg.m3 { margin-left: 3px; }
    .seg button { border-left-width: 0; }
    .seg button:first-child { border-left-width: 1px; }
    .seg .on { background: #444 !important; color: #fff; border-color: #444 !important; }
    .more {
      position: absolute;
      right: 2px;
      top: 5px;
      width: 7px;
      height: 22px;
      background: #fff;
      font-size: 10px;
      line-height: 22px;
      text-align: center;
    }

    .main {
      height: 691px;
      padding-left: 6px;
      display: flex;
      align-items: flex-start;
    }

    .side { width: 170px; height: 684px; display: flex; flex-direction: column; flex: none; }
    .tabs {
      height: 25px;
      display: flex;
      border-bottom: 1px solid #555;
      padding-right: 1px;
      flex: none;
    }
    .tabs span {
      width: 55px;
      background: #eee;
      border: 1px solid #d0d0cc;
      border-bottom: 0;
      text-align: center;
      line-height: 23px;
      color: #333;
    }
    .tabs .active {
      background: #fff;
      font-weight: bold;
      border: 1px solid #555;
      border-bottom: 0;
      height: 26px;
      color: #111;
    }
    .search {
      height: 27px;
      display: flex;
      gap: 0;
      padding: 3px 0 0 3px;
      flex: none;
    }
    .smart {
      width: 121px;
      height: 20px;
      background: #fff;
      border: 1px solid #c4c4c0;
      color: #b9b9b9;
      line-height: 18px;
      padding-left: 4px;
      letter-spacing: 0.2px;
    }
    .search .sm { margin-left: 3px; }
    .head {
      height: 23px;
      margin-left: 1px;
      background: #ececec;
      display: flex;
      align-items: center;
      gap: 7px;
      padding-left: 9px;
      flex: none;
    }
    .tree {
      height: 456px;
      margin-left: 1px;
      background: #fff;
      padding: 4px 0 0 24px;
      flex: none;
    }
    .root { height: 18px; line-height: 18px; position: relative; }
    .root::before {
      content: '';
      position: absolute;
      left: -13px;
      top: 3px;
      width: 9px;
      height: 7px;
      border-left: 1px dotted #999;
      border-bottom: 1px dotted #999;
    }
    .opt { height: 18px; display: flex; align-items: center; }
    .radio {
      width: 12px;
      height: 12px;
      border-radius: 50%;
      border: 1px solid #d0d0d0;
      background: #fff;
      margin-right: 4px;
      position: relative;
      flex: none;
    }
    .radio.sel { border-color: #888; }
    .radio.sel::after {
      content: '';
      position: absolute;
      inset: 2px;
      border-radius: 50%;
      background: #222;
    }
    .lbl { padding: 0 2px; line-height: 16px; }
    .lbl.sel { background: #0a78d6; color: #fff; }
    .sections { margin-left: 1px; height: 125px; background: #ececec; flex: none; }
    .sec { height: 25px; display: flex; align-items: center; gap: 8px; padding-left: 9px; }
    .foot {
      margin-left: 1px;
      height: 28px;
      background: #e2e1dc;
      border-top: 1px solid #ccc;
      display: flex;
      align-items: center;
      padding-left: 9px;
      flex: none;
    }
    .foot span { width: 77px; }
    .foot button {
      background: #e6e5e0;
      color: #999;
      margin-right: 2px;
      border: 1px solid #bdbdb8;
    }

    .chart { width: 1197px; margin-left: 6px; flex: none; display: flex; flex-direction: column; }
    .strip {
      height: 21px;
      background: #fff;
      border-top: 1px solid #c0c0c0;
      display: flex;
      align-items: stretch;
      line-height: 20px;
      flex: none;
    }
    .price {
      width: 307px;
      background: #c9daf0;
      display: flex;
      font-family: 'Liberation Mono', monospace;
      font-size: 13px;
      letter-spacing: -0.800px;
      flex: none;
    }
    .last { margin-left: 14px; color: #0000d0; }
    .chg { margin-left: 21px; color: #0000d0; }
    .pct { margin-left: 15px; color: #0000d0; }
    .vol { margin-left: 38px; color: #111; }
    .k { background: #ececec; text-align: center; flex: none; }
    .k1 { width: 22px; }
    .k2 { width: 21px; }
    .k3 { width: 58px; }
    .v {
      color: #0000d0;
      text-align: center;
      font-family: 'Liberation Mono', monospace;
      letter-spacing: -1.200px;
      flex: none;
    }
    .v1 { width: 71px; }
    .v2 { width: 71px; }
    .v3 { width: 49px; }
    .spacer { flex: 1; }
    .tag { width: 24px; text-align: center; letter-spacing: 1px; }
    .sgear {
      width: 20px;
      height: 18px;
      margin: 1px 1px 0;
      background: #eee;
      border: 1px solid #ccc;
      display: flex;
      align-items: center;
      justify-content: center;
    }
    .buy, .sell {
      width: 30px;
      height: 18px;
      margin: 1px 1px 0 0;
      text-align: center;
      line-height: 16px;
      border: 1px solid;
    }
    .buy { color: #d03030; border-color: #d03030; }
    .sell { color: #2050d0; border-color: #2050d0; }
    .pair { width: 11px; padding-top: 0; display: block; line-height: 0; }

    .pane { display: block; background: #fff; flex: none; }
    .pane text, .tools text {
      font-family: 'Liberation Mono', 'Noto Sans CJK KR', monospace;
      font-size: 14.500px;
    }
    .pane text.mini, .tools text.mini {
      font-family: 'Liberation Sans', sans-serif;
      font-size: 8px;
      font-weight: bold;
      fill: #222;
    }
    .tools text.auto {
      font-family: 'Liberation Sans', sans-serif;
      font-size: 7px;
      font-weight: bold;
      fill: #222;
    }
    .tools text.big {
      font-family: 'Liberation Serif', serif;
      font-size: 15px;
      fill: #222;
    }

    .scroll {
      height: 14px;
      display: flex;
      background: #efefef;
      border-bottom: 1px solid #c4c4c4;
      flex: none;
    }
    .arrow {
      width: 16px;
      height: 14px;
      background: #f2f2f0;
      border: 1px solid #999;
      border-top-color: #fff;
      border-left-color: #fff;
      display: flex;
      align-items: center;
      justify-content: center;
      flex: none;
    }
    .track {
      flex: 1;
      background: repeating-conic-gradient(#f6f6f6 0 25%, #ececec 0 50%) 0 0 / 2px 2px;
    }
    .ctl { display: block; flex: none; background: #efefef; }

    .tools {
      width: 26px;
      height: 486px;
      margin-left: 8px;
      padding-top: 0;
      background: #fff;
      border: 1px solid #d0d0cc;
      display: flex;
      flex-direction: column;
      align-items: center;
      flex: none;
    }
    .tools svg { display: block; flex: none; }
    .tools .cut { border-bottom: 1px solid #cfcfcf; }
  `;
}

declare global {
  interface HTMLElementTagNameMap {
    'app-root': AppRoot;
  }
}
